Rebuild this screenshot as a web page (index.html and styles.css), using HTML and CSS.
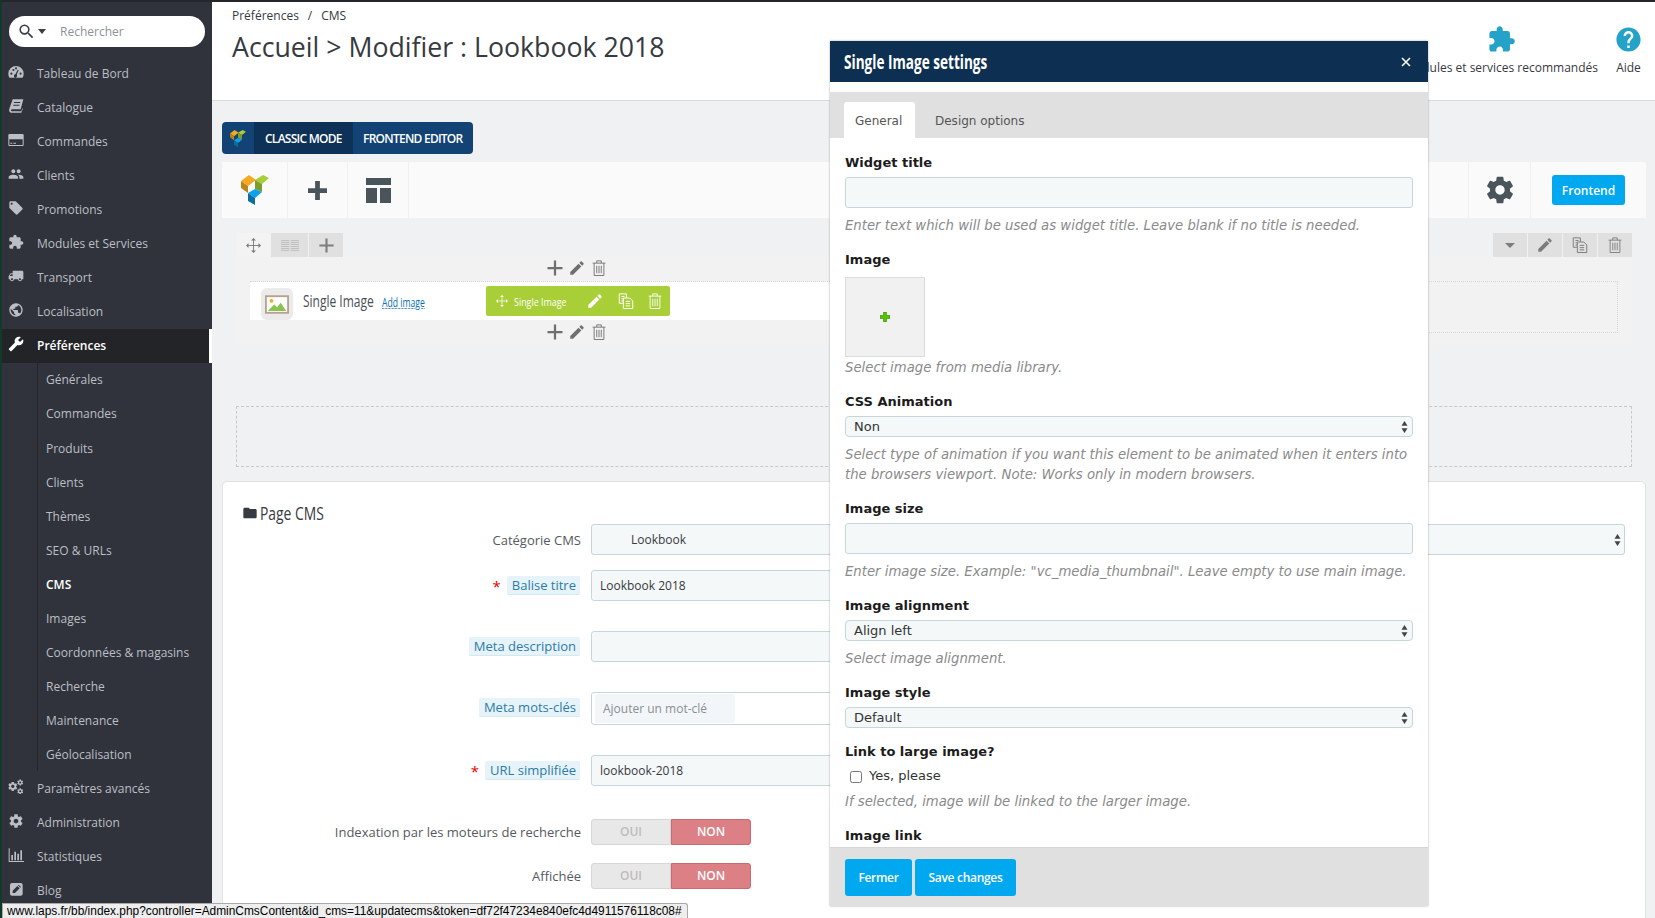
FILE: index.html
```html
<!DOCTYPE html>
<html lang="fr">
<head>
    <meta charset="utf-8">
    <title>Accueil &gt; Modifier : Lookbook 2018</title>
    <link rel="stylesheet" href="styles.css">
</head>
<body>
    <svg class="sprite" width="0" height="0">
        <defs>
            <path id="p-gear" d="M19.43 12.98c.04-.32.07-.64.07-.98s-.03-.66-.07-.98l2.11-1.65c.19-.15.24-.42.12-.64l-2-3.46c-.12-.22-.39-.3-.61-.22l-2.49 1c-.52-.4-1.08-.73-1.69-.98l-.38-2.65C14.46 2.18 14.25 2 14 2h-4c-.25 0-.46.18-.49.42l-.38 2.65c-.61.25-1.17.59-1.69.98l-2.49-1c-.23-.09-.49 0-.61.22l-2 3.46c-.13.22-.07.49.12.64l2.11 1.65c-.04.32-.07.65-.07.98s.03.66.07.98l-2.11 1.65c-.19.15-.24.42-.12.64l2 3.46c.12.22.39.3.61.22l2.49-1c.52.4 1.08.73 1.69.98l.38 2.65c.03.24.24.42.49.42h4c.25 0 .46-.18.49-.42l.38-2.65c.61-.25 1.17-.59 1.69-.98l2.49 1c.23.09.49 0 .61-.22l2-3.46c.12-.22.07-.49-.12-.64l-2.11-1.65zM12 15.5c-1.93 0-3.5-1.57-3.5-3.5s1.57-3.5 3.5-3.5 3.5 1.57 3.5 3.5-1.57 3.5-3.5 3.5z"/>
            <symbol id="i-gear" viewBox="0 0 24 24"><use href="#p-gear"/></symbol>
            <symbol id="i-cogs" viewBox="0 0 24 24">
                <use href="#p-gear" transform="translate(-1 3) scale(.68)"/>
                <use href="#p-gear" transform="translate(13 0) scale(.44)"/>
                <use href="#p-gear" transform="translate(13 13) scale(.44)"/>
            </symbol>
            <symbol id="i-search" viewBox="0 0 24 24"><path d="M15.5 14h-.79l-.28-.27A6.471 6.471 0 0 0 16 9.5 6.5 6.5 0 1 0 9.5 16c1.61 0 3.09-.59 4.23-1.57l.27.28v.79l5 4.99L20.49 19l-4.99-5zm-6 0C7.01 14 5 11.99 5 9.5S7.01 5 9.5 5 14 7.01 14 9.5 11.99 14 9.5 14z"/></symbol>
            <symbol id="i-gauge" viewBox="0 0 24 24"><path fill-rule="evenodd" d="M12 3A11.5 11.5 0 0 0 .5 14.5c0 2.300.6 4.300 1.700 6h19.600c1.100-1.700 1.700-3.700 1.700-6A11.500 11.500 0 0 0 12 3zM3.500 14.500a1.600 1.600 0 1 0 3.200 0a1.600 1.600 0 1 0-3.200 0zM6.500 9a1.600 1.600 0 1 0 3.200 0a1.600 1.600 0 1 0-3.200 0zM17.300 14.500a1.600 1.600 0 1 0 3.200 0a1.600 1.600 0 1 0-3.200 0zM10.400 6.500a1.600 1.600 0 1 0 3.200 0a1.600 1.600 0 1 0-3.200 0zM14.500 8.500l-3.400 7a2.400 2.400 0 1 0 2 .800l3-7.200z"/></symbol>
            <symbol id="i-book" viewBox="0 0 24 24"><path fill-rule="evenodd" d="M7 2h16l-4 15H6c-2 0-2 3 0 3h14l1-3.500 1.500-1L20 22H5.500C2 22 1 19 2 16zM9 6l-.4 1.500h9.500L18.500 6zM8 10l-.4 1.500h9.500l.4-1.500z"/></symbol>
            <symbol id="i-card" viewBox="0 0 24 24"><path fill-rule="evenodd" d="M2 3h20a1.500 1.500 0 0 1 1.500 1.500v15A1.500 1.500 0 0 1 22 21H2A1.500 1.500 0 0 1 .5 19.500v-15A1.500 1.500 0 0 1 2 3zM2 11v8.500h20V11zM3.500 16h3v1.500h-3zM8 16h4v1.500H8z"/></symbol>
            <symbol id="i-users" viewBox="0 0 24 24"><path d="M16 11c1.660 0 2.990-1.340 2.990-3S17.660 5 16 5c-1.660 0-3 1.340-3 3s1.340 3 3 3zm-8 0c1.660 0 2.990-1.340 2.990-3S9.660 5 8 5C6.340 5 5 6.340 5 8s1.340 3 3 3zm0 2c-2.330 0-7 1.170-7 3.500V19h14v-2.500c0-2.330-4.670-3.500-7-3.500zm8 0c-.29 0-.62.02-.97.05 1.160.84 1.970 1.970 1.970 3.450V19h6v-2.500c0-2.330-4.670-3.500-7-3.500z"/></symbol>
            <symbol id="i-tag" viewBox="0 0 24 24"><path d="M21.410 11.580l-9-9C12.050 2.220 11.550 2 11 2H4c-1.100 0-2 .9-2 2v7c0 .55.22 1.050.59 1.420l9 9c.36.36.86.58 1.410.58.55 0 1.050-.22 1.410-.59l7-7c.37-.36.59-.86.59-1.410 0-.55-.23-1.060-.59-1.420zM5.500 7C4.670 7 4 6.330 4 5.500S4.670 4 5.500 4 7 4.670 7 5.500 6.330 7 5.500 7z"/></symbol>
            <symbol id="i-puzzle" viewBox="0 0 24 24"><path d="M20.500 11H19V7c0-1.100-.9-2-2-2h-4V3.500C13 2.120 11.880 1 10.500 1S8 2.120 8 3.500V5H4c-1.100 0-1.990.9-1.990 2v3.800H3.500c1.490 0 2.700 1.210 2.700 2.700s-1.210 2.700-2.700 2.700H2V20c0 1.100.9 2 2 2h3.800v-1.500c0-1.490 1.210-2.700 2.700-2.700 1.490 0 2.700 1.210 2.700 2.700V22H17c1.100 0 2-.9 2-2v-4h1.500c1.380 0 2.500-1.120 2.500-2.500S21.880 11 20.500 11z"/></symbol>
            <symbol id="i-truck" viewBox="0 0 24 24"><path transform="matrix(-1 0 0 1 24 0)" d="M20 8h-3V4H3c-1.100 0-2 .9-2 2v11h2c0 1.660 1.340 3 3 3s3-1.340 3-3h6c0 1.660 1.340 3 3 3s3-1.340 3-3h2v-5l-3-4zM6 18.500c-.83 0-1.500-.67-1.500-1.500s.67-1.500 1.500-1.500 1.500.67 1.500 1.500-.67 1.500-1.500 1.500zm13.500-9l1.960 2.500H17V9.500h2.500zm-1.500 9c-.83 0-1.500-.67-1.500-1.500s.67-1.500 1.500-1.500 1.500.67 1.500 1.500-.67 1.500-1.500 1.500z"/></symbol>
            <symbol id="i-globe" viewBox="0 0 24 24"><path d="M12 2C6.480 2 2 6.480 2 12s4.480 10 10 10 10-4.480 10-10S17.520 2 12 2zm-1 17.930c-3.950-.49-7-3.850-7-7.930 0-.62.08-1.210.21-1.790L9 15v1c0 1.100.9 2 2 2v1.930zm6.900-2.540c-.26-.81-1-1.390-1.900-1.390h-1v-3c0-.55-.45-1-1-1H8v-2h2c.55 0 1-.45 1-1V7h2c1.100 0 2-.9 2-2v-.41c2.930 1.190 5 4.060 5 7.410 0 2.080-.8 3.970-2.100 5.390z"/></symbol>
            <symbol id="i-wrench" viewBox="0 0 24 24"><path transform="matrix(-1 0 0 1 24 0)" d="M22.700 19l-9.100-9.100c.9-2.300.4-5-1.500-6.900-2-2-5-2.400-7.400-1.300L9 6 6 9 1.600 4.700C.4 7.100.9 10.100 2.900 12.100c1.900 1.900 4.600 2.400 6.900 1.500l9.100 9.100c.4.4 1 .4 1.400 0l2.300-2.300c.5-.4.5-1.100.1-1.400z"/></symbol>
            <symbol id="i-bars" viewBox="0 0 24 24"><path d="M1 2h1.500v19H24v1.500H1zM5 12h2.500v8H5zM9.500 7h2.500v13H9.500zM14 10h2.500v10H14zM18.500 5H21v15h-2.500z"/></symbol>
            <symbol id="i-blog" viewBox="0 0 24 24"><path fill-rule="evenodd" d="M6 3h13a3 3 0 0 1 3 3v13a3 3 0 0 1-3 3H6a3 3 0 0 1-3-3V6a3 3 0 0 1 3-3zM7 14.500V18h3.500l7-7L14 7.500zM15 6.500l3.500 3.500 1-1-3.500-3.500z"/></symbol>
            <symbol id="i-folder" viewBox="0 0 24 24"><path d="M10 4H4c-1.100 0-1.990.9-1.990 2L2 18c0 1.100.9 2 2 2h16c1.100 0 2-.9 2-2V8c0-1.100-.9-2-2-2h-8l-2-2z"/></symbol>
            <symbol id="i-help" viewBox="0 0 24 24"><path d="M12 2C6.480 2 2 6.480 2 12s4.480 10 10 10 10-4.480 10-10S17.520 2 12 2zm1 17h-2v-2h2v2zm2.070-7.750l-.9.92C13.450 12.900 13 13.500 13 15h-2v-.5c0-1.100.45-2.100 1.170-2.830l1.240-1.260c.37-.36.59-.86.59-1.410 0-1.100-.9-2-2-2s-2 .9-2 2H8c0-2.210 1.790-4 4-4s4 1.790 4 4c0 .88-.36 1.680-.93 2.250z"/></symbol>
            <symbol id="i-pencil" viewBox="0 0 24 24"><path d="M3 17.250V21h3.750L17.810 9.940l-3.750-3.750L3 17.250zM20.710 7.040c.39-.39.39-1.020 0-1.410l-2.340-2.340c-.39-.39-1.020-.39-1.410 0l-1.830 1.830 3.750 3.750 1.830-1.830z"/></symbol>
            <symbol id="i-trash" viewBox="0 0 24 24"><path fill="none" stroke="currentColor" stroke-width="1.200" d="M3.500 5.500h17M9 5.500V2.500h6v3M5.500 5.500v16.500h13V5.500M9 9v10M12 9v10M15 9v10"/></symbol>
            <symbol id="i-copy" viewBox="0 0 24 24"><path fill="none" stroke="currentColor" stroke-width="1.300" d="M8 15H3V2.500h9.500V8M6 6h4M6 9h2M6 12h2M8.500 8H17l4 4v10H8.500zM11.500 12.500h6M11.500 15.500h6M11.500 18.500h6"/></symbol>
            <symbol id="i-move" viewBox="0 0 24 24"><path fill="none" stroke="currentColor" stroke-width="1.500" d="M12 3v18M3 12h18"/><path d="M12 0l4 4H8zM12 24l-4-4h8zM0 12l4-4v8zM24 12l-4 4V8z"/></symbol>
            <symbol id="i-plus" viewBox="0 0 24 24"><path d="M10.500 2h3v8.500H22v3h-8.500V22h-3v-8.500H2v-3h8.500z"/></symbol>
            <symbol id="i-plus-bold" viewBox="0 0 20 20"><path d="M7.500 0h5v7.500H20v5h-7.500V20h-5v-7.500H0v-5h7.500z"/></symbol>
            <symbol id="i-list" viewBox="0 0 26 16"><path fill="none" stroke="currentColor" d="M0 .5h12M14 .5h12M0 3.500h12M14 3.500h12M0 6.500h12M14 6.500h12M0 9.500h12M14 9.500h12M0 12.500h12M14 12.500h12M0 15.500h12M14 15.500h12"/></symbol>
            <symbol id="i-vc" viewBox="0 0 28 30">
                <polygon fill="#f6a821" points="0,6 8,0 15,5 7,11"/>
                <polygon fill="#bf8415" points="0,6 7,11 7,18 0,13"/>
                <polygon fill="#a9cf38" points="14,5 22,0 28,3 21,9"/>
                <polygon fill="#7f9b2a" points="14,5 21,9 21,17 14,14"/>
                <polygon fill="#0ba2e8" points="7,18 14,14 21,17 14,23"/>
                <polygon fill="#0a6f9e" points="7,18 14,23 14,30 7,26"/>
            </symbol>
            <symbol id="i-arrows" viewBox="0 0 8 14"><path d="M4 0l3.500 5.500h-7zM4 14L.5 8.500h7z"/></symbol>
        </defs>
    </svg>

    <div class="app">
        <nav class="sidebar">
            <div class="search">
                <svg class="search-icon"><use href="#i-search"/></svg>
                <span class="search-caret"></span>
                <span class="search-text">Rechercher</span>
            </div>
            <a class="nav-item"><svg><use href="#i-gauge"/></svg>Tableau de Bord</a>
            <a class="nav-item"><svg><use href="#i-book"/></svg>Catalogue</a>
            <a class="nav-item"><svg><use href="#i-card"/></svg>Commandes</a>
            <a class="nav-item"><svg><use href="#i-users"/></svg>Clients</a>
            <a class="nav-item"><svg><use href="#i-tag"/></svg>Promotions</a>
            <a class="nav-item"><svg><use href="#i-puzzle"/></svg>Modules et Services</a>
            <a class="nav-item"><svg><use href="#i-truck"/></svg>Transport</a>
            <a class="nav-item"><svg><use href="#i-globe"/></svg>Localisation</a>
            <a class="nav-item nav-item-active"><svg><use href="#i-wrench"/></svg>Préférences</a>
            <div class="submenu">
                <a class="sub-item">Générales</a>
                <a class="sub-item">Commandes</a>
                <a class="sub-item">Produits</a>
                <a class="sub-item">Clients</a>
                <a class="sub-item">Thèmes</a>
                <a class="sub-item">SEO &amp; URLs</a>
                <a class="sub-item sub-item-active">CMS</a>
                <a class="sub-item">Images</a>
                <a class="sub-item">Coordonnées &amp; magasins</a>
                <a class="sub-item">Recherche</a>
                <a class="sub-item">Maintenance</a>
                <a class="sub-item">Géolocalisation</a>
            </div>
            <a class="nav-item"><svg><use href="#i-cogs"/></svg>Paramètres avancés</a>
            <a class="nav-item"><svg><use href="#i-gear"/></svg>Administration</a>
            <a class="nav-item"><svg><use href="#i-bars"/></svg>Statistiques</a>
            <a class="nav-item"><svg><use href="#i-blog"/></svg>Blog</a>
        </nav>

        <main class="main">
            <header class="page-head">
                <div>
                    <div class="breadcrumb"><span>Préférences</span><i>/</i><span>CMS</span></div>
                    <h1>Accueil &gt; Modifier : Lookbook 2018</h1>
                </div>
                <div class="head-links">
                    <a class="head-link"><svg><use href="#i-puzzle"/></svg>Modules et services recommandés</a>
                    <a class="head-link"><svg><use href="#i-help"/></svg>Aide</a>
                </div>
            </header>

            <div class="composer-nav">
                <span class="composer-logo"><svg><use href="#i-vc"/></svg></span>
                <a class="composer-tab composer-tab-active">CLASSIC MODE</a>
                <a class="composer-tab">FRONTEND EDITOR</a>
            </div>

            <div class="toolbar">
                <span class="tool tool-logo"><svg><use href="#i-vc"/></svg></span>
                <span class="tool"><svg class="tool-plus"><use href="#i-plus-bold"/></svg></span>
                <span class="tool tool-layout">
                    <span class="layout-icon"><b></b><b></b><b></b></span>
                </span>
                <span class="toolbar-fill"></span>
                <span class="tool tool-gear"><svg><use href="#i-gear"/></svg></span>
                <span class="tool-frontend"><a class="btn-frontend">Frontend</a></span>
            </div>

            <section class="vc-row">
                <div class="vc-tabs">
                    <div class="vc-tabs-left">
                        <span class="vc-tab vc-tab-move"><svg><use href="#i-move"/></svg></span>
                        <span class="vc-tab vc-tab-list"><svg><use href="#i-list"/></svg></span>
                        <span class="vc-tab vc-tab-add"><svg><use href="#i-plus"/></svg></span>
                    </div>
                    <div class="vc-tabs-right">
                        <span class="vc-tab vc-tab-r"><span class="caret"></span></span>
                        <span class="vc-tab vc-tab-r"><svg><use href="#i-pencil"/></svg></span>
                        <span class="vc-tab vc-tab-r"><svg><use href="#i-copy"/></svg></span>
                        <span class="vc-tab vc-tab-r"><svg><use href="#i-trash"/></svg></span>
                    </div>
                </div>
                <div class="vc-body">
                    <div class="vc-controls vc-controls-top">
                        <svg><use href="#i-plus"/></svg><svg><use href="#i-pencil"/></svg><svg><use href="#i-trash"/></svg>
                    </div>
                    <div class="vc-column">
                        <div class="vc-element">
                            <span class="image-icon">
                                <svg viewBox="0 0 26 20">
                                    <rect x="1" y="1" width="24" height="18" fill="#fdfdfb" stroke="#b5a28f" stroke-width="2"/>
                                    <circle cx="7" cy="6" r="2" fill="#f6a821"/>
                                    <polygon fill="#8cc152" points="3,17 10,10 13,13 17,8 23,17"/>
                                </svg>
                            </span>
                            <span class="element-name">Single Image</span>
                            <a class="element-link">Add image</a>
                            <div class="element-bar">
                                <svg class="bar-move"><use href="#i-move"/></svg>
                                <span class="bar-name">Single Image</span>
                                <svg class="bar-pencil"><use href="#i-pencil"/></svg>
                                <svg class="bar-copy"><use href="#i-copy"/></svg>
                                <svg class="bar-trash"><use href="#i-trash"/></svg>
                            </div>
                        </div>
                        <div class="vc-controls">
                            <svg><use href="#i-plus"/></svg><svg><use href="#i-pencil"/></svg><svg><use href="#i-trash"/></svg>
                        </div>
                    </div>
                </div>
            </section>

            <div class="dashed-box"></div>

            <section class="panel">
                <h2 class="panel-title"><svg><use href="#i-folder"/></svg><span>Page CMS</span></h2>

                <div class="form-row">
                    <label class="form-label">Catégorie CMS</label>
                    <div class="form-input form-select">
                        <span class="indent">Lookbook</span>
                        <svg class="select-arrows"><use href="#i-arrows"/></svg>
                    </div>
                </div>
                <div class="form-row form-row-wide">
                    <label class="form-label"><em>*</em><span class="chip">Balise titre</span></label>
                    <input class="form-input form-input-short" type="text" value="Lookbook 2018">
                </div>
                <div class="form-row form-row-wide">
                    <label class="form-label"><span class="chip">Meta description</span></label>
                    <input class="form-input form-input-short" type="text">
                </div>
                <div class="form-row form-row-wide">
                    <label class="form-label"><span class="chip">Meta mots-clés</span></label>
                    <div class="form-input form-input-short form-tags"><span class="tag-input">Ajouter un mot-clé</span></div>
                </div>
                <div class="form-row form-row-url">
                    <label class="form-label"><em>*</em><span class="chip">URL simplifiée</span></label>
                    <input class="form-input form-input-short" type="text" value="lookbook-2018">
                </div>
                <div class="form-row form-row-switch">
                    <label class="form-label">Indexation par les moteurs de recherche</label>
                    <div class="switch"><span>OUI</span><span class="switch-on">NON</span></div>
                </div>
                <div class="form-row form-row-switch">
                    <label class="form-label">Affichée</label>
                    <div class="switch"><span>OUI</span><span class="switch-on">NON</span></div>
                </div>
            </section>
        </main>
    </div>

    <div class="modal">
        <div class="modal-head">
            <span class="modal-title">Single Image settings</span>
            <svg class="modal-close" viewBox="0 0 10 10"><path d="M1 1l8 8M9 1l-8 8"/></svg>
        </div>
        <div class="modal-tabs">
            <a class="modal-tab modal-tab-active">General</a>
            <a class="modal-tab">Design options</a>
        </div>
        <div class="modal-body">
            <div class="field">
                <label>Widget title</label>
                <input class="field-input" type="text">
                <p class="help">Enter text which will be used as widget title. Leave blank if no title is needed.</p>
            </div>
            <div class="field">
                <label>Image</label>
                <div class="image-box"><svg viewBox="0 0 10 10"><path d="M3.500 0h3v3.500H10v3H6.500V10h-3V6.500H0v-3h3.500z"/></svg></div>
                <p class="help help-tight">Select image from media library.</p>
            </div>
            <div class="field">
                <label>CSS Animation</label>
                <div class="field-select"><span>Non</span><svg><use href="#i-arrows"/></svg></div>
                <p class="help">Select type of animation if you want this element to be animated when it enters into the browsers viewport. Note: Works only in modern browsers.</p>
            </div>
            <div class="field">
                <label>Image size</label>
                <input class="field-input" type="text">
                <p class="help">Enter image size. Example: "vc_media_thumbnail". Leave empty to use main image.</p>
            </div>
            <div class="field">
                <label>Image alignment</label>
                <div class="field-select"><span>Align left</span><svg><use href="#i-arrows"/></svg></div>
                <p class="help">Select image alignment.</p>
            </div>
            <div class="field">
                <label>Image style</label>
                <div class="field-select"><span>Default</span><svg><use href="#i-arrows"/></svg></div>
            </div>
            <div class="field">
                <label>Link to large image?</label>
                <div class="check-row"><input type="checkbox"><span>Yes, please</span></div>
                <p class="help">If selected, image will be linked to the larger image.</p>
            </div>
            <div class="field">
                <label>Image link</label>
            </div>
        </div>
        <div class="modal-foot">
            <a class="btn-blue btn-close">Fermer</a>
            <a class="btn-blue btn-save">Save changes</a>
        </div>
    </div>

    <div class="status-bar">www.laps.fr/bb/index.php?controller=AdminCmsContent&amp;id_cms=11&amp;updatecms&amp;token=df72f47234e840efc4d4911576118c08#</div>
</body>
</html>
```

FILE: styles.css
```css
* {
    box-sizing: border-box;
}

html, body {
    height: 100%;
    overflow: hidden;
}

body {
    margin: 0;
    background-color: #eff1f3;
    color: #363a41;
    font-family: "Open Sans", sans-serif;
    font-size: 13px;
}

.sprite {
    position: absolute;
}

svg {
    fill: currentColor;
}

a {
    text-decoration: none;
}

.app {
    display: flex;
    height: 918px;
    overflow: hidden;
    border-top: 2px solid #25262b;
    border-left: 2px solid #123a2a;
}

/* sidebar */

.sidebar {
    width: 210px;
    flex-shrink: 0;
    padding-top: 14px;
    background-color: #30333b;
    overflow: hidden;
}

.search {
    display: flex;
    align-items: center;
    width: 196px;
    height: 31px;
    margin: 0 0 9.5px 7px;
    padding-left: 8px;
    background-color: #fff;
    border-radius: 16px;
    color: #3b3f46;
}

.search-icon {
    width: 19px;
    height: 19px;
}

.search-caret {
    width: 0;
    height: 0;
    margin: 0 0 0 2px;
    border-style: solid;
    border-width: 5px 4px 0;
    border-color: #3b3f46 transparent transparent;
}

.search-text {
    margin-left: 14px;
    color: #8d9199;
    font-size: 12px;
}

.nav-item {
    display: flex;
    align-items: center;
    height: 34.05px;
    padding-left: 6px;
    color: #bbbfc5;
    font-size: 12px;
}

.nav-item svg {
    width: 16px;
    height: 16px;
    margin-right: 13px;
    flex-shrink: 0;
    position: relative;
    top: -2px;
}

.nav-item-active {
    background-color: #232428;
    border-right: 3px solid #fff;
    color: #fff;
    font-weight: 600;
}

.submenu {
    margin-left: 35px;
    border-left: 1px solid #24262b;
}

.sub-item {
    display: flex;
    align-items: center;
    height: 34.05px;
    padding-left: 8px;
    color: #bbbfc5;
    font-size: 12px;
}

.sub-item-active {
    color: #fff;
    font-weight: 600;
}

/* main column */

.main {
    flex: 1;
    min-width: 0;
    overflow: hidden;
    padding: 0 9px 0 10px;
}

.page-head {
    display: flex;
    justify-content: space-between;
    height: 99px;
    margin: 0 -9px 0 -10px;
    padding: 7px 12px 0 20px;
    background-color: #fff;
    border-bottom: 1px solid #d9dadb;
}

.breadcrumb {
    font-size: 12px;
    line-height: 13px;
    color: #363a41;
}

.breadcrumb i {
    margin: 0 9px;
    font-style: normal;
}

h1 {
    margin: 8px 0 0;
    font-size: 26.7px;
    font-weight: 400;
    line-height: 34px;
    color: #363a41;
}

.head-links {
    display: flex;
    gap: 16px;
    padding-top: 16px;
}

.head-link {
    display: flex;
    flex-direction: column;
    align-items: center;
    font-size: 12px;
    line-height: 16px;
    color: #363a41;
}

.head-link svg {
    width: 29px;
    height: 29px;
    margin-bottom: 6px;
    color: #25a2c8;
}

.composer-nav {
    display: flex;
    width: 251px;
    height: 32px;
    margin-top: 21px;
    background-color: #134375;
    border-radius: 4px;
    overflow: hidden;
    color: #fff;
}

.composer-logo {
    display: flex;
    align-items: center;
    justify-content: center;
    flex-shrink: 0;
    width: 33px;
    border-right: 1px solid #0d3056;
}

.composer-logo svg {
    width: 16px;
    height: 17px;
}

.composer-tab {
    display: flex;
    align-items: center;
    flex-shrink: 0;
    padding: 0 10px;
    color: #fff;
    font-size: 12px;
    font-weight: 600;
    letter-spacing: -0.75px;
    white-space: nowrap;
}

.composer-tab-active {
    width: 98px;
    background-color: #0e3157;
}

.toolbar {
    display: flex;
    height: 56px;
    margin-top: 8px;
    background-color: #fafafa;
    color: #4a545b;
}

.tool {
    display: flex;
    align-items: center;
    justify-content: center;
    width: 60px;
    border-right: 1px solid #f0f0f0;
}

.tool-logo {
    width: 66px;
}

.tool-layout {
    width: 61px;
}

.tool-logo svg {
    width: 28px;
    height: 30px;
}

.tool-plus {
    width: 19px;
    height: 19px;
}

.layout-icon {
    display: grid;
    grid-template-columns: 11px 11px;
    grid-template-rows: 7px 15px;
    gap: 3px;
}

.layout-icon b {
    background-color: #4a545b;
}

.layout-icon b:first-child {
    grid-column: 1 / 3;
}

.toolbar-fill {
    flex: 1;
    border-right: 1px solid #f0f0f0;
}

.tool-gear {
    width: 62px;
}

.tool-gear svg {
    width: 32px;
    height: 32px;
}

.tool-frontend {
    display: flex;
    align-items: center;
    padding: 0 21px;
}

.btn-frontend {
    display: flex;
    align-items: center;
    justify-content: center;
    width: 73px;
    height: 30px;
    background-color: #00a8ef;
    border-radius: 3px;
    color: #fff;
    font-size: 12px;
    font-weight: 600;
}

/* composer row */

.vc-row {
    margin: 15px 14px 0;
}

.vc-tabs {
    display: flex;
    justify-content: space-between;
    height: 24px;
}

.vc-tabs-left,
.vc-tabs-right {
    display: flex;
    gap: 1px;
}

.vc-tab {
    display: flex;
    align-items: center;
    justify-content: center;
    background-color: #e0e0e0;
    color: #7c7c7c;
}

.vc-tab-move {
    width: 34px;
    background-color: #f3f3f3;
}

.vc-tab-move svg {
    width: 15px;
    height: 15px;
}

.vc-tab-list {
    width: 37px;
    color: #aeaeae;
}

.vc-tab-list svg {
    width: 24px;
    height: 11px;
}

.vc-tab-add {
    width: 34px;
}

.vc-tab-add svg {
    width: 17px;
    height: 17px;
}

.vc-tab-r {
    width: 34px;
}

.vc-tab-r svg {
    width: 18px;
    height: 18px;
}

.caret {
    width: 0;
    height: 0;
    border-style: solid;
    border-width: 5px 5px 0;
    border-color: #7c7c7c transparent transparent;
}

.vc-body {
    height: 88px;
    padding: 0 14px;
    background-color: #f2f2f3;
}

.vc-controls {
    display: flex;
    align-items: center;
    justify-content: center;
    gap: 4px;
    width: 654px;
    height: 24px;
    background-color: #f2f2f3;
    color: #6f6f6f;
}

.vc-controls-top {
    padding-bottom: 2px;
}

.vc-controls svg {
    width: 18px;
    height: 18px;
}

.vc-column {
    height: 52px;
    border-style: dotted;
    border-color: #d6d6d6;
    border-width: 1px 1px 1px 0;
}

.vc-element {
    display: flex;
    align-items: center;
    width: 654px;
    height: 38px;
    padding-left: 11px;
    background-color: #fff;
}

.image-icon {
    display: flex;
    align-items: center;
    justify-content: center;
    width: 32px;
    height: 32px;
    margin-top: 6px;
    background-color: #ebebeb;
    border-radius: 6px;
}

.image-icon svg {
    width: 24px;
    height: 19px;
}

/* the original face is condensed, none is installed */
.element-name,
.element-link,
.bar-name,
.modal-title,
.panel-title span {
    display: inline-block;
    white-space: nowrap;
    transform-origin: 0 50%;
}

.element-name {
    width: 72px;
    margin-left: 10px;
    font-size: 16px;
    color: #4a4f55;
    transform: scaleX(0.75);
}

.element-link {
    width: 43px;
    margin: 2px 0 0 7px;
    font-size: 12px;
    color: #0a6fb0;
    text-decoration: underline dotted;
    transform: scaleX(0.72);
}

.element-bar {
    display: flex;
    align-items: center;
    width: 184px;
    height: 30px;
    margin-left: auto;
    margin-right: 234px;
    padding-left: 10px;
    background-color: #a8cf37;
    border-radius: 2px;
    color: #fff;
}

.bar-move {
    width: 12px;
    height: 12px;
    flex-shrink: 0;
}

.bar-name {
    width: 55px;
    margin: 0 17px 0 6px;
    font-size: 11px;
    transform: scaleX(0.81);
}

.bar-pencil,
.bar-copy,
.bar-trash {
    width: 18px;
    height: 18px;
    flex-shrink: 0;
}

.bar-pencil {
    margin-right: 13px;
}

.bar-copy {
    margin-right: 11px;
}

.dashed-box {
    height: 61px;
    margin: 61px 14px 0;
    border: 1px dashed #c9c9c9;
}

/* CMS form */

.panel {
    height: 500px;
    margin-top: 14px;
    padding: 21px 20px 0 19px;
    background-color: #fff;
    border: 1px solid #dfe3e5;
    border-radius: 5px;
}

.panel-title {
    display: flex;
    align-items: center;
    height: 20px;
    margin: 0 0 1px;
    font-size: 18px;
    font-weight: 400;
    color: #363a41;
}

.panel-title svg {
    width: 16px;
    height: 16px;
    margin-right: 2px;
}

.panel-title span {
    transform: scaleX(0.77);
}

.form-row {
    display: flex;
    align-items: flex-start;
    margin: 0 0 15px -19px;
}

.form-row-wide {
    margin-bottom: 30px;
}

.form-row-url {
    margin-bottom: 33px;
}

.form-row-switch {
    margin-bottom: 18px;
}

.form-label {
    display: flex;
    justify-content: flex-end;
    align-items: center;
    gap: 3px;
    width: 358px;
    height: 31px;
    margin-right: 10px;
    flex-shrink: 0;
    font-size: 13px;
    color: #555a61;
}

.form-label em {
    color: #e00;
    font-size: 15px;
    font-style: normal;
}

.chip {
    height: 19px;
    margin: 0 1px 0 3px;
    padding: 0 4px 0 5px;
    background-color: #e6f3f9;
    border-bottom: 1px solid #d3e8f2;
    border-radius: 2px;
    line-height: 18px;
    color: #2d7ba8;
}

.form-input {
    flex: 1;
    min-width: 0;
    height: 31px;
    padding: 0 8px;
    background-color: #f5f8f9;
    border: 1px solid #c7d6db;
    border-radius: 3px;
    font-family: inherit;
    font-size: 12px;
    color: #363a41;
    outline: none;
}

.form-input-short {
    flex: none;
    width: 600px;
}

.form-select {
    display: flex;
    align-items: center;
    justify-content: space-between;
    padding-right: 3px;
}

.indent {
    padding-left: 31px;
}

.select-arrows {
    width: 7px;
    height: 12px;
    color: #444;
}

.form-tags {
    display: flex;
    align-items: center;
    height: 33px;
    padding: 0 3px;
    background-color: #fff;
}

.tag-input {
    display: flex;
    align-items: center;
    width: 140px;
    height: 29px;
    padding-left: 8px;
    background-color: #f3f6f8;
    border-radius: 3px;
    color: #8b8f93;
}

.switch {
    display: flex;
    width: 160px;
    height: 26px;
    font-size: 12px;
    font-weight: 600;
    text-align: center;
    line-height: 24px;
}

.switch span {
    width: 80px;
    background-color: #e8e8e8;
    border: 1px solid #d6d6d6;
    border-radius: 3px 0 0 3px;
    color: #bdbdbd;
}

.switch .switch-on {
    background-color: #dd8086;
    border-color: #c56c72;
    border-radius: 0 3px 3px 0;
    color: #fff;
}

.form-row-switch .form-label {
    height: 26px;
}

/* modal */

.modal {
    position: absolute;
    top: 41px;
    left: 830px;
    display: flex;
    flex-direction: column;
    width: 598px;
    height: 865px;
    background-color: #fff;
    box-shadow: 0 0 2px rgba(0, 0, 0, 0.35);
    font-family: "DejaVu Sans", sans-serif;
    font-size: 13px;
    color: #1c1c1c;
}

.modal-head {
    display: flex;
    align-items: center;
    justify-content: space-between;
    flex-shrink: 0;
    height: 41px;
    padding: 0 17px 0 14px;
    background-color: #0d2f52;
    color: #fff;
}

.modal-title {
    width: 143px;
    font-family: "Open Sans", sans-serif;
    font-size: 19px;
    font-weight: 700;
    transform: scaleX(0.715);
}

.modal-close {
    width: 10px;
    height: 10px;
    fill: none;
    stroke: #fff;
    stroke-width: 1.6;
}

.modal-tabs {
    display: flex;
    flex-shrink: 0;
    height: 46px;
    margin-top: 10px;
    padding: 10px 0 0 14px;
    background-color: #e0e0e0;
}

.modal-tab {
    display: flex;
    align-items: center;
    padding: 2px 19px 0 11px;
    border-radius: 3px 3px 0 0;
    font-size: 12px;
    color: #555;
}

.modal-tab-active {
    width: 71px;
    background-color: #fff;
}

.modal-tab + .modal-tab {
    padding-left: 20px;
}

.modal-body {
    flex: 1;
    min-height: 0;
    overflow: hidden;
    padding: 16px 15px 0 15px;
}

.field {
    margin-bottom: 15px;
}

.field label {
    display: block;
    margin-bottom: 5px;
    font-weight: 700;
    line-height: 18px;
}

.field-input {
    display: block;
    width: 100%;
    height: 31px;
    background-color: #f4f8f9;
    border: 1px solid #c7d6db;
    border-radius: 3px;
    outline: none;
}

.field-select {
    display: flex;
    align-items: center;
    justify-content: space-between;
    height: 21px;
    padding: 0 4px 0 8px;
    background-color: #f4f8f9;
    border: 1px solid #c7d6db;
    border-radius: 4px;
    color: #333;
}

.field-select svg {
    width: 7px;
    height: 12px;
    color: #444;
}

.help {
    margin: 8px 0 0;
    font-size: 13.25px;
    font-style: italic;
    line-height: 20px;
    color: #8a8a8a;
}

.help-tight {
    margin-top: 1px;
}

.image-box {
    display: flex;
    align-items: center;
    justify-content: center;
    width: 80px;
    height: 80px;
    margin-top: 8px;
    background-color: #f1f1f1;
    border: 1px solid #dcdcdc;
}

.image-box svg {
    width: 10px;
    height: 10px;
    fill: #58c400;
    stroke: #2f8f00;
    stroke-width: 0.6;
}

.check-row {
    display: flex;
    align-items: center;
    height: 18px;
    padding-left: 5px;
    color: #333;
}

.check-row input {
    width: 12px;
    height: 12px;
    margin: 3px 7px 0 0;
}

.modal-foot {
    display: flex;
    flex-shrink: 0;
    gap: 3px;
    height: 59px;
    padding: 11px 0 0 15px;
    background-color: #e0e0e0;
    border-top: 1px solid #d6d6d6;
}

.btn-blue {
    display: flex;
    align-items: center;
    justify-content: center;
    height: 37px;
    background-color: #00a8ef;
    border-radius: 3px;
    font-family: "Open Sans", sans-serif;
    font-size: 12px;
    font-weight: 600;
    letter-spacing: -0.3px;
    color: #fff;
}

.btn-close {
    width: 67px;
}

.btn-save {
    width: 101px;
}

.status-bar {
    position: absolute;
    left: 2px;
    bottom: 0;
    width: 686px;
    height: 15px;
    padding: 0 0 0 4px;
    background-color: #eee;
    border: 1px solid #a9a9a9;
    border-bottom: none;
    border-radius: 0 3px 0 0;
    font-family: "Liberation Sans", sans-serif;
    font-size: 11.9px;
    line-height: 15px;
    color: #000;
    white-space: nowrap;
}
```
